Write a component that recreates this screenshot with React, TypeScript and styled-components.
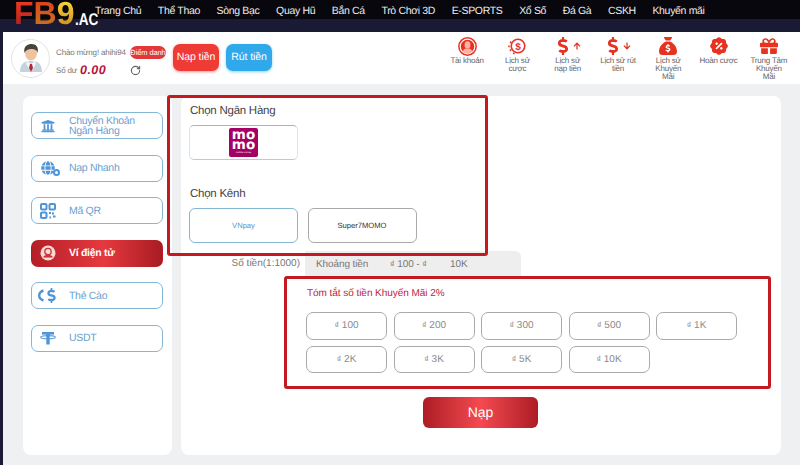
import React from "react";
import styled, { createGlobalStyle } from "styled-components";
import { RotateCw } from "lucide-react";
import {
  FaArrowUp,
  FaArrowDown,
  FaDollarSign,
  FaGift,
  FaGlobe,
  FaUniversity,
} from "react-icons/fa";
import { FaSackDollar } from "react-icons/fa6";
import { RiDiscountPercentFill } from "react-icons/ri";

const NAVY = "#1b1a35";
const ICON_RED = "#e6321f";
const ICON_BLUE = "#4f94d6";

const GlobalStyle = createGlobalStyle`
  * { box-sizing: border-box; }
  html, body { margin: 0; padding: 0; background: ${NAVY}; }
  body {
    font-family: "Liberation Sans", Arial, sans-serif;
    text-rendering: geometricPrecision;
  }
`;

const Page = styled.div`
  position: relative;
  width: 800px;
  height: 465px;
  overflow: hidden;
  background: ${NAVY};
`;

const TopBar = styled.nav`
  display: flex;
  height: 32px;
  padding-left: 14px;
  background: linear-gradient(180deg, #08070e 19px, ${NAVY} 19px);
`;

const Logo = styled.div`
  flex: none;
  width: 81px;
  height: 26px;
  font-size: 32px;
  font-weight: 700;
  line-height: 26px;
  white-space: nowrap;
`;

const LogoLetter = styled.span<{ $from: string; $to: string }>`
  display: inline-block;
  height: 26px;
  background: linear-gradient(180deg, ${(p) => p.$from}, ${(p) => p.$to});
  -webkit-background-clip: text;
  background-clip: text;
  color: transparent;
`;

const LogoSuffix = styled.span`
  display: inline-block;
  margin-left: 1px;
  font-size: 17px;
  line-height: 17px;
  color: #fff;
  transform: translateY(1px) scaleX(0.8);
  transform-origin: left;
`;

const NavLinks = styled.div`
  display: flex;
  gap: 16.6px;
  padding-top: 4px;
`;

const NavLink = styled.span`
  font-size: 10.5px;
  letter-spacing: -0.33px;
  line-height: 14px;
  color: #ececec;
  white-space: nowrap;
`;

const Content = styled.div`
  margin-left: 3px;
  height: 433px;
  background: #eff0f2;
`;

const Header = styled.header`
  display: flex;
  align-items: center;
  height: 52px;
  padding: 0 6px 0 8px;
  background: #fff;
`;

const Avatar = styled.div`
  display: flex;
  align-items: center;
  justify-content: center;
  flex: none;
  width: 39px;
  height: 39px;
  margin-right: 6px;
  border: 1px solid #e2e2e2;
  border-radius: 50%;
`;

const Greeting = styled.div`
  display: flex;
  flex-direction: column;
  gap: 6px;
  align-self: flex-start;
  width: 74px;
  margin-top: 14px;
`;

const GreetingLine = styled.div`
  display: flex;
  align-items: center;
  gap: 3px;
  height: 12px;
  font-size: 8px;
  letter-spacing: -0.15px;
  color: #777;
  white-space: nowrap;
`;

const Balance = styled.span`
  font-size: 12.5px;
  font-weight: 700;
  font-style: italic;
  letter-spacing: 0.4px;
  color: #b9123c;
`;

const Status = styled.div`
  display: flex;
  flex-direction: column;
  gap: 6px;
  align-self: flex-start;
  width: 36px;
  margin-top: 14px;
`;

const CheckInPill = styled.div`
  height: 13px;
  border-radius: 7px;
  background: #e2383a;
  font-size: 7.5px;
  letter-spacing: -0.1px;
  line-height: 13px;
  color: #fff;
  text-align: center;
  white-space: nowrap;
`;

const RefreshIcon = styled(RotateCw)`
  color: #666;
`;

const HeaderButtons = styled.div`
  display: flex;
  gap: 7px;
  align-self: flex-start;
  margin: 12px 0 0 7px;
`;

const HeaderButton = styled.div<{ $color: string }>`
  width: 46px;
  height: 27px;
  border-radius: 7px;
  background: ${(p) => p.$color};
  box-shadow: 0 1px 3px ${(p) => p.$color}88;
  font-size: 10.5px;
  letter-spacing: -0.1px;
  line-height: 26px;
  color: #fff;
  text-align: center;
  white-space: nowrap;
`;

const Shortcuts = styled.div`
  display: flex;
  align-self: flex-start;
  margin-left: auto;
  padding-top: 5px;
`;

const Shortcut = styled.div`
  display: flex;
  flex-direction: column;
  align-items: center;
  width: 50.3px;
`;

const ShortcutIcon = styled.div`
  display: flex;
  align-items: center;
  justify-content: center;
  gap: 1px;
  height: 18px;
  margin-bottom: 2px;
  color: ${ICON_RED};
`;

const ShortcutLabel = styled.div`
  font-size: 8px;
  letter-spacing: -0.2px;
  line-height: 8px;
  color: #666;
  text-align: center;
  white-space: pre-line;
`;

const Body = styled.div`
  display: flex;
  gap: 9px;
  padding: 12px 19px 0 20px;
`;

const Sidebar = styled.aside`
  display: flex;
  flex-direction: column;
  gap: 15.6px;
  flex: none;
  width: 149px;
  height: 359px;
  padding: 16px 9px 0 8px;
  border-radius: 8px;
  background: #fff;
`;

const SideItem = styled.div<{ $active?: boolean }>`
  display: flex;
  align-items: center;
  height: 27px;
  border: 1px solid ${(p) => (p.$active ? "transparent" : "#84b6d6")};
  border-radius: 7px;
  background: ${(p) =>
    p.$active
      ? "linear-gradient(90deg, #b41f27, #e5393f 55%, #a81c22)"
      : "#fff"};
  color: ${(p) => (p.$active ? "#fff" : "#6a9fd0")};
`;

const SideIcon = styled.div`
  display: flex;
  align-items: center;
  justify-content: center;
  position: relative;
  flex: none;
  width: 32px;
  height: 18px;
  margin-right: 5px;
  color: ${ICON_BLUE};
`;

const GearDot = styled.span`
  position: absolute;
  right: 4px;
  bottom: 1px;
  width: 7px;
  height: 7px;
  border: 2px solid ${ICON_BLUE};
  border-radius: 50%;
  background: #fff;
`;

const SideText = styled.div<{ $active?: boolean }>`
  font-size: 10.5px;
  letter-spacing: -0.3px;
  line-height: 10px;
  font-weight: ${(p) => (p.$active ? 700 : 400)};
  white-space: pre-line;
`;

const Main = styled.main`
  flex: none;
  width: 600px;
  height: 359px;
  padding: 7px 0 0 8px;
  border-radius: 8px;
  background: #fff;
`;

const SectionTitle = styled.div<{ $gap?: number }>`
  margin: ${(p) => p.$gap ?? 0}px 0 5px 1px;
  font-size: 11.5px;
  letter-spacing: -0.25px;
  line-height: 17px;
  color: #444;
`;

const BankCard = styled.div`
  display: flex;
  align-items: center;
  justify-content: center;
  width: 109px;
  height: 35px;
  border: 1px solid #d5e6f0;
  border-top-color: #8fbdd6;
  border-bottom-color: #a9cfe2;
  border-radius: 5px;
`;

const MomoLogo = styled.div`
  display: flex;
  flex-direction: column;
  align-items: center;
  width: 29px;
  height: 29px;
  padding-top: 2px;
  border-radius: 2px;
  background: #a50064;
  color: #fff;
`;

const MomoWord = styled.div`
  width: 26px;
  font-family: "DejaVu Sans", sans-serif;
  font-size: 13.5px;
  font-weight: 700;
  line-height: 10px;
  text-align: center;
`;

const MomoTag = styled.span`
  margin-top: 1px;
  font-size: 2.5px;
  line-height: 3px;
`;

const ChannelRow = styled.div`
  display: flex;
  gap: 9.5px;
`;

const Channel = styled.div<{ $selected?: boolean }>`
  width: 109px;
  height: 35px;
  border: 1px solid ${(p) => (p.$selected ? "#84b6d6" : "#aaa")};
  border-radius: 6px;
  font-size: 7.6px;
  line-height: 33px;
  color: ${(p) => (p.$selected ? "#5b8fc9" : "#333")};
  text-align: center;
`;

const AmountRow = styled.div`
  display: flex;
  margin-top: 8px;
`;

const AmountLabel = styled.div`
  width: 111px;
  padding-top: 5px;
  font-size: 10px;
  line-height: 15px;
  color: #777;
  text-align: right;
`;

const AmountRange = styled.div`
  display: flex;
  width: 216px;
  height: 25px;
  margin-left: 5px;
  padding: 6px 0 0 11px;
  border-radius: 0 6px 0 0;
  background: #eee;
  font-size: 10px;
  letter-spacing: -0.1px;
  line-height: 15px;
  color: #777;
`;

const RangeCell = styled.span<{ $width: number }>`
  width: ${(p) => p.$width}px;
  white-space: nowrap;
`;

const Currency = styled.span`
  font-size: 9px;
`;

const Promo = styled.section`
  margin: 10px 0 0 117px;
`;

const PromoTitle = styled.div`
  margin: 0 0 10px 1px;
  font-size: 10px;
  letter-spacing: -0.05px;
  line-height: 16px;
  color: #c0223a;
`;

const AmountGrid = styled.div`
  display: grid;
  grid-template-columns: repeat(5, 81px);
  grid-auto-rows: 27.5px;
  gap: 6px 6.5px;
`;

const AmountButton = styled.div`
  border: 1px solid #aaa;
  border-radius: 7px;
  font-size: 10px;
  line-height: 24px;
  color: #8a8a8a;
  text-align: center;
`;

const SubmitButton = styled.div`
  width: 115px;
  height: 31px;
  margin: 24px 0 0 234px;
  border-radius: 6px;
  background: linear-gradient(90deg, #ad1c24, #f44a50 50%, #ad1c24);
  font-size: 14px;
  line-height: 30px;
  color: #fff;
  text-align: center;
`;

const Callout = styled.div<{ $x: number; $y: number; $w: number; $h: number }>`
  position: absolute;
  left: ${(p) => p.$x}px;
  top: ${(p) => p.$y}px;
  width: ${(p) => p.$w}px;
  height: ${(p) => p.$h}px;
  border: 3px solid #c21a20;
  border-radius: 3px;
  pointer-events: none;
`;

const navItems = [
  "Trang Chủ",
  "Thể Thao",
  "Sòng Bạc",
  "Quay Hũ",
  "Bắn Cá",
  "Trò Chơi 3D",
  "E-SPORTS",
  "Xổ Số",
  "Đá Gà",
  "CSKH",
  "Khuyến mãi",
];

const amounts = ["100", "200", "300", "500", "1K", "2K", "3K", "5K", "10K"];

const AvatarArt = () => (
  <svg width="24" height="30" viewBox="0 0 24 30">
    <path d="M1 29c0-8 4-11 11-11s11 3 11 11z" fill="#c3d2de" />
    <path d="M8 18l4 3 4-3 1 3-5 8-5-8z" fill="#f4f4f4" />
    <path d="M11 21h2l1 4-2 4-2-4z" fill="#b4283c" />
    <ellipse cx="12" cy="10" rx="6" ry="7.5" fill="#edc3a0" />
    <path d="M5.500 10C4 3 9 1 12.500 1 17 1 20 4 18.500 10 18 7 16 6 12 6 9 6 7 7 5.500 10z" fill="#4a4238" />
  </svg>
);

const ProfileIcon = () => (
  <svg width="19" height="19" viewBox="0 0 18 18">
    <circle cx="9" cy="9" r="8.200" fill="none" stroke="currentColor" strokeWidth="1.400" />
    <circle cx="9" cy="9" r="6.400" fill="currentColor" />
    <ellipse cx="9" cy="7.500" rx="2.800" ry="3.400" fill="#f7b3a6" />
    <path d="M4.500 14c.6-2.500 2.200-3 4.500-3s3.900.5 4.500 3a6.400 6.400 0 0 1-9 0z" fill="#f7b3a6" />
  </svg>
);

const HistoryIcon = () => (
  <svg width="18" height="18" viewBox="0 0 18 18">
    <circle cx="10" cy="9" r="6.800" fill="none" stroke="currentColor" strokeWidth="1.600" />
    <path d="M3.200 4.500l-1 1.600M1 8.500v1.800M2 12.500l1 1.500M5 16l1.500.8" stroke="currentColor" strokeWidth="1.500" fill="none" />
    <text x="10" y="12.500" fontSize="10" fontWeight="700" textAnchor="middle" fill="currentColor" fontFamily="Liberation Sans, sans-serif">$</text>
  </svg>
);

const WalletBadge = () => (
  <svg width="16" height="16" viewBox="0 0 16 16">
    <circle cx="8" cy="8" r="7.500" fill="#f8d8d3" />
    <circle cx="8" cy="6.500" r="3.200" fill="none" stroke="#c8343a" strokeWidth="1.300" />
    <path d="M3.500 12.500h9v-1.200c-1-1-2.500-1.300-4.500-1.300s-3.500.3-4.500 1.300z" fill="#c8343a" />
  </svg>
);

const QrIcon = () => (
  <svg width="16" height="16" viewBox="0 0 16 16" fill="none" stroke="currentColor" strokeWidth="2">
    <rect x="1" y="1" width="5.500" height="5.500" rx="1" />
    <rect x="9.500" y="1" width="5.500" height="5.500" rx="1" />
    <rect x="1" y="9.500" width="5.500" height="5.500" rx="1" />
    <path d="M9 10h2M13 9.500v2M9.500 14.500h1.500M13 13.500h2.500" />
  </svg>
);

const ScratchCardIcon = () => (
  <>
    <svg width="6" height="13" viewBox="0 0 6 13">
      <path d="M5.500 1.500C2.500 2.500 1.200 4.500 1.200 6.500s1.300 4 4.300 5" fill="none" stroke="currentColor" strokeWidth="2.400" />
    </svg>
    <FaDollarSign size={15} />
  </>
);

const TetherIcon = () => (
  <svg width="16" height="14" viewBox="0 0 16 14" fill="currentColor">
    <rect x="2" y="1" width="12" height="2.600" />
    <rect x="6.300" y="1" width="3.400" height="12.500" />
    <ellipse cx="8" cy="6.200" rx="7.300" ry="1.600" fill="none" stroke="currentColor" strokeWidth="1.100" />
  </svg>
);

const shortcuts: { label: string; icon: React.ReactNode }[] = [
  { label: "Tài khoản", icon: <ProfileIcon /> },
  { label: "Lịch sử\ncược", icon: <HistoryIcon /> },
  {
    label: "Lịch sử\nnạp tiền",
    icon: (
      <>
        <FaDollarSign size={18} />
        <FaArrowUp size={8} />
      </>
    ),
  },
  {
    label: "Lịch sử rút\ntiền",
    icon: (
      <>
        <FaDollarSign size={18} />
        <FaArrowDown size={8} />
      </>
    ),
  },
  { label: "Lịch sử\nKhuyến\nMãi", icon: <FaSackDollar size={18} /> },
  { label: "Hoàn cược", icon: <RiDiscountPercentFill size={20} /> },
  { label: "Trung Tâm\nKhuyến\nMãi", icon: <FaGift size={18} /> },
];

const sideItems: { label: string; icon: React.ReactNode; active?: boolean }[] = [
  { label: "Chuyển Khoản\nNgân Hàng", icon: <FaUniversity size={14} /> },
  {
    label: "Nạp Nhanh",
    icon: (
      <>
        <FaGlobe size={14} />
        <GearDot />
      </>
    ),
  },
  { label: "Mã QR", icon: <QrIcon /> },
  { label: "Ví điện tử", icon: <WalletBadge />, active: true },
  { label: "Thẻ Cào", icon: <ScratchCardIcon /> },
  { label: "USDT", icon: <TetherIcon /> },
];

export default function App() {
  return (
    <Page>
      <GlobalStyle />
      <TopBar>
        <Logo>
          <LogoLetter $from="#ee3c22" $to="#b3201a">F</LogoLetter>
          <LogoLetter $from="#e2401c" $to="#c8741a">B</LogoLetter>
          <LogoLetter $from="#fbd83a" $to="#d0901a">9</LogoLetter>
          <LogoSuffix>.AC</LogoSuffix>
        </Logo>
        <NavLinks>
          {navItems.map((item) => (
            <NavLink key={item}>{item}</NavLink>
          ))}
        </NavLinks>
      </TopBar>
      <Content>
        <Header>
          <Avatar>
            <AvatarArt />
          </Avatar>
          <Greeting>
            <GreetingLine>Chào mừng! ahihi94</GreetingLine>
            <GreetingLine>
              Số dư <Balance>0.00</Balance>
            </GreetingLine>
          </Greeting>
          <Status>
            <CheckInPill>Điểm danh</CheckInPill>
            <RefreshIcon size={11} strokeWidth={2.5} />
          </Status>
          <HeaderButtons>
            <HeaderButton $color="#ee3b35">Nạp tiền</HeaderButton>
            <HeaderButton $color="#2fa9ea">Rút tiền</HeaderButton>
          </HeaderButtons>
          <Shortcuts>
            {shortcuts.map((s) => (
              <Shortcut key={s.label}>
                <ShortcutIcon>{s.icon}</ShortcutIcon>
                <ShortcutLabel>{s.label}</ShortcutLabel>
              </Shortcut>
            ))}
          </Shortcuts>
        </Header>
        <Body>
          <Sidebar>
            {sideItems.map((item) => (
              <SideItem key={item.label} $active={item.active}>
                <SideIcon>{item.icon}</SideIcon>
                <SideText $active={item.active}>{item.label}</SideText>
              </SideItem>
            ))}
          </Sidebar>
          <Main>
            <SectionTitle>Chọn Ngân Hàng</SectionTitle>
            <BankCard>
              <MomoLogo>
                <MomoWord>mo mo</MomoWord>
                <MomoTag>mobile money</MomoTag>
              </MomoLogo>
            </BankCard>
            <SectionTitle $gap={26}>Chọn Kênh</SectionTitle>
            <ChannelRow>
              <Channel $selected>VNpay</Channel>
              <Channel>Super7MOMO</Channel>
            </ChannelRow>
            <AmountRow>
              <AmountLabel>Số tiền(1:1000)</AmountLabel>
              <AmountRange>
                <RangeCell $width={74}>Khoảng tiền</RangeCell>
                <RangeCell $width={60}>
                  <Currency>₫</Currency> 100 - <Currency>₫</Currency>
                </RangeCell>
                <RangeCell $width={30}>10K</RangeCell>
              </AmountRange>
            </AmountRow>
            <Promo>
              <PromoTitle>Tóm tắt số tiền Khuyến Mãi 2%</PromoTitle>
              <AmountGrid>
                {amounts.map((a) => (
                  <AmountButton key={a}>
                    <Currency>₫</Currency> {a}
                  </AmountButton>
                ))}
              </AmountGrid>
            </Promo>
            <SubmitButton>Nạp</SubmitButton>
          </Main>
        </Body>
      </Content>
      <Callout $x={167} $y={95} $w={321} $h={161} />
      <Callout $x={284} $y={276} $w={487} $h={113} />
    </Page>
  );
}
